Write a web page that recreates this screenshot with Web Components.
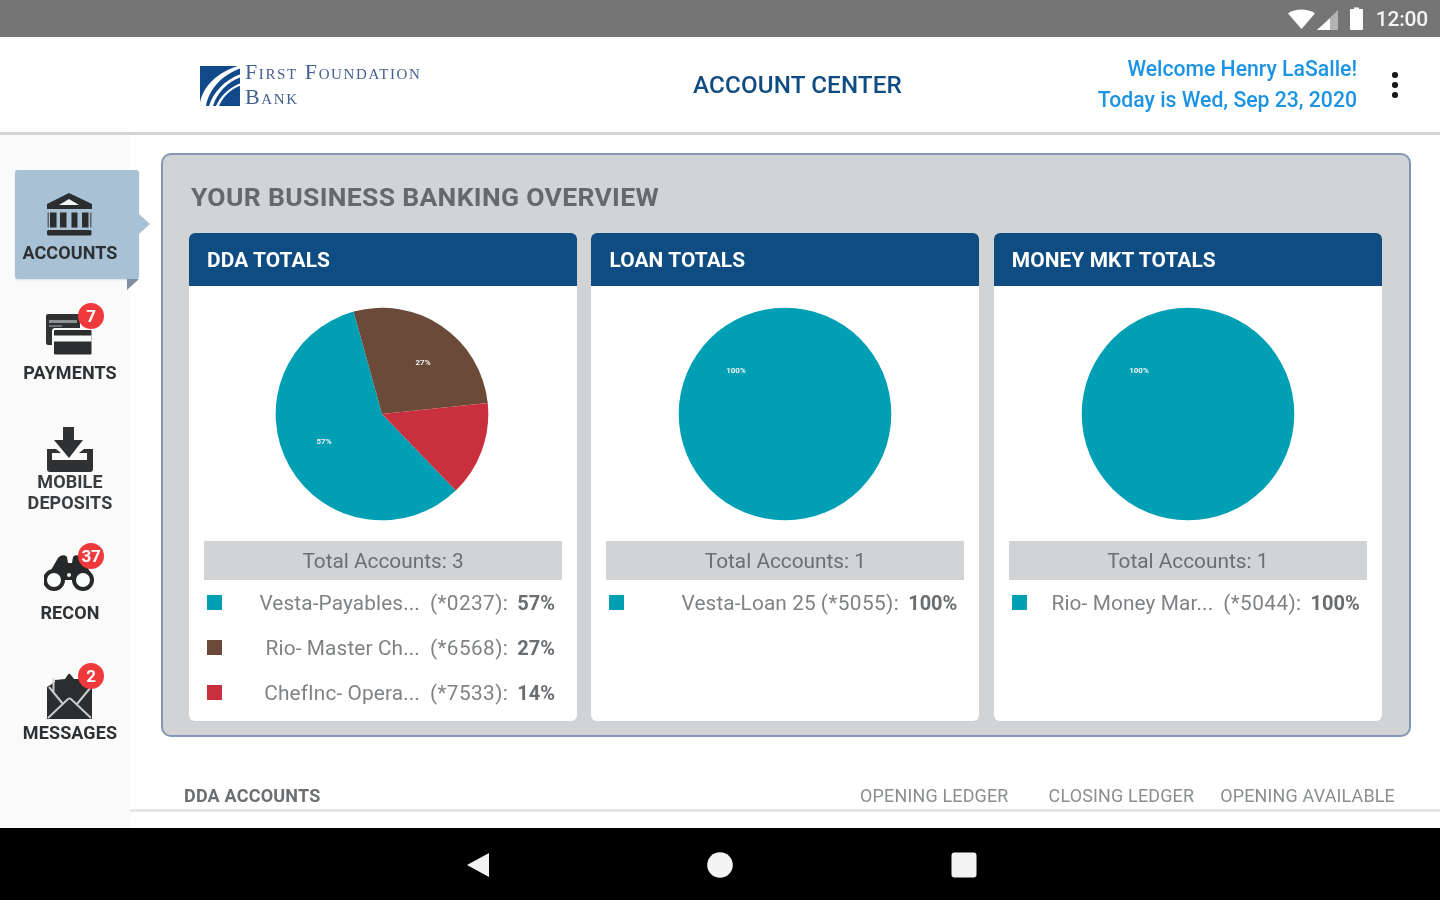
<!DOCTYPE html>
<html lang="en"><head><meta charset="utf-8"><title>Account Center</title>
<style>
html,body{margin:0;padding:0;background:#fff}
body{font-family:Roboto,"Liberation Sans",sans-serif;width:1440px;height:900px;overflow:hidden}
app-shell{filter:blur(.55px)}
</style></head><body>
<app-shell>
  <status-bar slot="status"></status-bar>
  <app-header slot="header"></app-header>
  <side-nav slot="nav">
    <nav-item label="ACCOUNTS" active>
      <svg slot="icon" width="48" height="48" viewBox="0 0 48 48"><path fill="#2b2d2f" d="M23 1 46 12v5H1v-5z"/><path fill="#f4f6f6" d="M23 7 33 13H13z"/><path fill="#2b2d2f" d="M4 20.500h6.500v15H4zM14 20.500h6.500v15H14zM25.500 20.500h6v15h-6zM36 20.500h6.500v15H36z"/><path fill="#5d6266" d="M1.500 20.500h1.500v15H1.500zM44 20.500h1.500v15H44z"/><rect x="1" y="38" width="44.500" height="5.500" rx="1.500" fill="#2b2d2f"/></svg>
    </nav-item>
    <nav-item label="PAYMENTS" badge="7">
      <svg slot="icon" width="48" height="48" viewBox="0 0 48 48"><rect x="0" y="2" width="34" height="31" rx="2" fill="#2f3133"/><rect x="3" y="8" width="28" height="3" fill="#8d9194"/><rect x="3" y="13" width="13" height="2" fill="#6d7174"/><rect x="7" y="17" width="39.500" height="26.500" rx="2" fill="#2b2d2f" stroke="#f8f9f9" stroke-width="2"/><rect x="8" y="23.500" width="37.500" height="6" fill="#f8f9f9"/></svg>
    </nav-item>
    <nav-item compact>
      <svg slot="icon" width="48" height="45" viewBox="0 0 48 45"><path fill="#2f3133" d="M17 0h11v13h9L23 31 8 13h9z"/><path fill="#2f3133" d="M1 22h9l5 4H6v10h35V26h-8l5-4h9v20a3 3 0 0 1-3 3H4a3 3 0 0 1-3-3z"/><path fill="#2f3133" d="M6 33h35v5H6z"/></svg>
      <span>MOBILE<br>DEPOSITS</span>
    </nav-item>
    <nav-item label="RECON" badge="37">
      <svg slot="icon" width="52" height="48" viewBox="0 0 52 48"><path fill="#26282a" d="M3 25 14 6c2-3 7-4 9-1l1 6h4l1-6c2-3 7-2 9 1l11 19-8 3H12z"/><circle cx="10" cy="28" r="9" fill="#fafbfb" stroke="#26282a" stroke-width="4"/><circle cx="39" cy="28" r="9" fill="#fafbfb" stroke="#26282a" stroke-width="4"/><path fill="#26282a" d="M19 17h12v9H19z"/><circle cx="25" cy="23" r="2" fill="#fafbfb"/></svg>
    </nav-item>
    <nav-item label="MESSAGES" badge="2">
      <svg slot="icon" width="48" height="50" viewBox="0 0 48 50"><path fill="#2b2d2f" d="M1 15 9 10V8L19 7l3-4.500Q23 1 24.500 2.500L28 7h10v3l8 5v32H1z"/><path fill="none" stroke="#c9cbcc" stroke-width="2" d="M7.500 20V6.500M3 15l14 17M45 15 31 32M2 46 22 27q1.500-1 3 0l20 19"/></svg>
    </nav-item>
  </side-nav>
  <overview-panel slot="main" heading="YOUR BUSINESS BANKING OVERVIEW">
    <total-card heading="DDA TOTALS" total="3" chart="dda">
      <legend-row color="#009fb3" name="Vesta-Payables..." acct="(*0237):" pct="57%"></legend-row>
      <legend-row color="#6b4a3a" name="Rio- Master Ch..." acct="(*6568):" pct="27%"></legend-row>
      <legend-row color="#c92f3c" name="ChefInc- Opera..." acct="(*7533):" pct="14%"></legend-row>
    </total-card>
    <total-card heading="LOAN TOTALS" total="1">
      <legend-row color="#009fb3" name="Vesta-Loan 25" acct="(*5055):" pct="100%" tight></legend-row>
    </total-card>
    <total-card heading="MONEY MKT TOTALS" total="1">
      <legend-row color="#009fb3" name="Rio- Money Mar..." acct="(*5044):" pct="100%"></legend-row>
    </total-card>
  </overview-panel>
  <table-head slot="main"></table-head>
  <system-nav slot="sysnav"></system-nav>
</app-shell>
<script>
function def(name, css, html){
  customElements.define(name, class extends HTMLElement{
    connectedCallback(){
      if(this.shadowRoot) return;
      const r=this.attachShadow({mode:'open'});
      const a=n=>this.getAttribute(n)||'';
      r.innerHTML='<style>'+css+'</style>'+(typeof html==='function'?html(a,this):html);
    }
  });
}
def('app-shell',`
:host{display:flex;flex-direction:column;width:1440px;height:900px;background:#fff}
.mid{flex:1;display:flex;min-height:0}
.main{flex:1;min-width:0;display:flex;flex-direction:column;overflow:hidden}
`,`<slot name="status"></slot><slot name="header"></slot>
<div class="mid"><slot name="nav"></slot><div class="main"><slot name="main"></slot></div></div>
<slot name="sysnav"></slot>`);

def('status-bar',`
:host{display:flex;align-items:center;justify-content:flex-end;height:37px;background:#757575;padding-right:12px;color:#f4f4f4;font:500 21px Roboto,sans-serif;box-sizing:border-box}
svg{display:block}
.t{margin-left:11px;letter-spacing:-.2px}
`,`<svg width="77" height="24" viewBox="0 0 77 24">
<path fill="#fff" d="M0 6.500C4 3.500 9 2.500 13.500 2.500s9.500 1 13.500 4L13.500 22z"/>
<path fill="#fff" fill-opacity=".45" d="M50 3V23H29z"/><path fill="#fff" d="M42 11.500V23H29z"/>
<path fill="#fff" d="M63 2h3V.5h5V2h3a1 1 0 0 1 1 1v19a1 1 0 0 1-1 1H63a1 1 0 0 1-1-1V3a1 1 0 0 1 1-1z"/>
</svg><span class="t">12:00</span>`);

def('app-header',`
:host{display:flex;align-items:center;height:98px;box-sizing:border-box;padding-left:200px;background:#fff;border-bottom:3px solid #d4d5d6;font-family:Roboto,sans-serif}
.logo{display:flex;align-items:center;gap:4px;width:226px;margin-top:-1px}
.lt{font:400 22px/25px "Liberation Serif",serif;font-variant:small-caps;color:#44608f;white-space:nowrap;letter-spacing:1.6px}
.title{margin-left:267px;font-weight:500;font-size:24.200px;letter-spacing:.15px;color:#0f4c81;white-space:nowrap;margin-top:1px}
.right{margin-left:auto;text-align:right;color:#1c93e3;font-size:21.200px;line-height:31px;font-weight:500;white-space:nowrap;margin-top:-1px}
.kebab{width:6px;margin:1px 42px 0 35px;display:flex;flex-direction:column;gap:4.500px}
.kebab i{display:block;width:5.500px;height:5.500px;border-radius:50%;background:#16181a}
`,`<div class="logo"><svg width="41" height="41" viewBox="0 0 41 41" style="margin-top:3px"><rect x="0" y="1" width="40" height="40" fill="#12498b"/>
<path fill="#fff" d="M0 41V38C3 22 16 7 41 0V3C22 10 9 24 6 41z"/><path fill="#fff" d="M9 41C13 28 24 15 41 9v3C27 17 17 28 13 41z"/><path fill="#fff" d="M16 41C20 32 28 23 41 18v2.500C30 24 23 32 19 41z"/></svg>
<div class="lt">First Foundation<br>Bank</div></div>
<div class="title">ACCOUNT CENTER</div>
<div class="right">Welcome Henry LaSalle!<br>Today is Wed, Sep 23, 2020</div>
<div class="kebab"><i></i><i></i><i></i></div>`);

def('side-nav',`
:host{display:flex;flex-direction:column;width:130px;flex:none;background:#fafafa;padding-top:30px;box-sizing:border-box;position:relative;z-index:1}
`,`<slot></slot>`);

def('nav-item',`
:host{display:block;position:relative;width:140px;height:120px;font:700 18px/20px Roboto,sans-serif;color:#2e3133;letter-spacing:.1px}
.inner{position:relative;display:flex;flex-direction:column;align-items:center;padding-top:27px;text-align:center;box-sizing:border-box;height:100%}
.icon{height:48px;display:flex;align-items:flex-start;justify-content:center}
.label{margin-top:3px;white-space:nowrap}
:host([compact]) .inner{padding-top:22px}
:host([compact]) .icon{height:45px}
:host([compact]) .label{margin-top:-1px;line-height:21px;color:#3a3d40}
.tile{display:none}
:host([active]) .tile{display:block;position:absolute;left:15px;right:1px;top:5px;bottom:6px;background:#a9c1d5;border-radius:3px;box-shadow:0 1px 2px rgba(0,0,0,.12)}
:host([active]) .tile::after{content:"";position:absolute;left:100%;top:44px;border:solid transparent;border-width:10px 0 10px 11px;border-left-color:#a9c1d5}
:host([active]) .tile::before{content:"";position:absolute;right:0;top:100%;width:0;height:0;border-top:11px solid #7f8fa0;border-left:0 solid transparent;border-right:12px solid transparent}
.badge{position:absolute;left:78px;top:18px;width:26px;height:26px;border-radius:50%;background:#ee3a3c;color:#fff;font:700 17px/26px Roboto,sans-serif;text-align:center;letter-spacing:-.3px}
`,(a)=>`<div class="tile"></div><div class="inner"><div class="icon"><slot name="icon"></slot></div><div class="label">${a('label')}<slot></slot></div></div>${a('badge')?`<div class="badge">${a('badge')}</div>`:''}`);

def('overview-panel',`
:host{display:block;flex:none;margin:18px 29px 0 31px;height:584px;box-sizing:border-box;background:#d1d3d5;border:2px solid #8596b4;border-radius:10px;padding:0 27px 0 26px;font-family:Roboto,sans-serif}
h2{margin:0;height:78px;font:700 26.500px/84px Roboto,sans-serif;color:#66696c;padding-left:2px;letter-spacing:.33px;white-space:nowrap}
.grid{display:grid;grid-template-columns:repeat(3,388px);column-gap:14.400px;height:488px}
`,a=>`<h2>${a('heading')}</h2><div class="grid"><slot></slot></div>`);

const pie=(chart)=>{
  const cx=107,cy=107,r=106.300;
  const pt=d=>{const t=d*Math.PI/180;return (cx+r*Math.sin(t)).toFixed(1)+' '+(cy-r*Math.cos(t)).toFixed(1)};
  const seg=(a,b,c)=>`<path fill="${c}" d="M${cx} ${cy}L${pt(a)}A${r} ${r} 0 ${b-a>180?1:0} 1 ${pt(b)}Z"/>`;
  const txt=(x,y,s)=>`<text x="${x}" y="${y}" font-family="Roboto,sans-serif" font-weight="700" font-size="8" fill="#f2f2f2" text-anchor="middle">${s}</text>`;
  if(chart==='dda') return `<svg style="margin-left:-2px" width="214" height="214" viewBox="0 0 214 214">${seg(136,344.500,'#009fb3')}${seg(344.500,444,'#6b4a3a')}${seg(84,136,'#c92f3c')}${txt(148,58,'27%')}${txt(49,137,'57%')}</svg>`;
  return `<svg width="214" height="214" viewBox="0 0 214 214"><circle cx="107" cy="107" r="106.300" fill="#009fb3"/>${txt(58,66,'100%')}</svg>`;
};
def('total-card',`
:host{display:flex;flex-direction:column;background:#fff;border-radius:6px;overflow:hidden;font-family:Roboto,sans-serif}
header{height:53px;flex:none;background:#0e4c82;color:#fff;font:700 20.900px/54px Roboto,sans-serif;padding-left:18px;white-space:nowrap;letter-spacing:.1px}
.chart{height:255px;flex:none;display:flex;justify-content:center;padding-top:21px;box-sizing:border-box}
svg{display:block}
.total{margin:0 15px;height:39px;flex:none;background:#d1d3d5;color:#6c6f72;font:400 20.800px/41px Roboto,sans-serif;text-align:center}
.rows{display:flex;flex-direction:column}
`,a=>`<header>${a('heading')}</header><div class="chart">${pie(a('chart'))}</div><div class="total">Total Accounts: ${a('total')}</div><div class="rows"><slot></slot></div>`);

def('legend-row',`
:host{display:flex;align-items:center;height:45px;padding:0 22px 0 18px;font:400 20.800px Roboto,sans-serif;color:#7f8285;white-space:nowrap}
.sw{width:15px;height:15px;flex:none;margin-top:-1px}
.name{flex:1;text-align:right;min-width:0;letter-spacing:.12px}
.acct{margin-left:10px;letter-spacing:.4px}
:host([tight]) .acct{margin-left:5px}
.pct{margin-left:9px;font-weight:700;font-size:20px;color:#6a6d70}
`,a=>`<span class="sw" style="background:${a('color')}"></span><span class="name">${a('name')}</span><span class="acct">${a('acct')}</span><span class="pct">${a('pct')}</span>`);

def('table-head',`
:host{display:flex;flex:none;align-items:center;height:75px;box-sizing:border-box;padding:46px 45px 0 54px;border-bottom:3px solid #e4e5e6;font:400 17.900px/20px Roboto,sans-serif;color:#8b8e90;white-space:nowrap;letter-spacing:.2px}
.a{font-weight:700;font-size:18px;color:#6c6f72;margin-right:auto}
.b{margin-left:40px}.c{margin-left:26px}
`,`<span class="a">DDA ACCOUNTS</span><span>OPENING LEDGER</span><span class="b">CLOSING LEDGER</span><span class="c">OPENING AVAILABLE</span>`);

def('system-nav',`
:host{display:flex;align-items:center;height:72px;flex:none;background:#000;box-sizing:border-box;padding-top:1px}
.row{flex:1;display:flex;align-items:center;padding-left:466px}
svg{display:block}
`,`<div class="row"><svg width="24" height="26" viewBox="0 0 24 26"><path fill="#f2f2f2" d="M23 1v24L1 13z"/></svg>
<svg style="margin-left:217px" width="26" height="26" viewBox="0 0 26 26"><circle cx="13" cy="13" r="12.800" fill="#f4f4f4"/></svg>
<svg style="margin-left:218px" width="26" height="26" viewBox="0 0 26 26"><rect x=".5" y=".5" width="25" height="25" rx="3" fill="#f4f4f4"/></svg></div>`);
</script>
</body></html>
